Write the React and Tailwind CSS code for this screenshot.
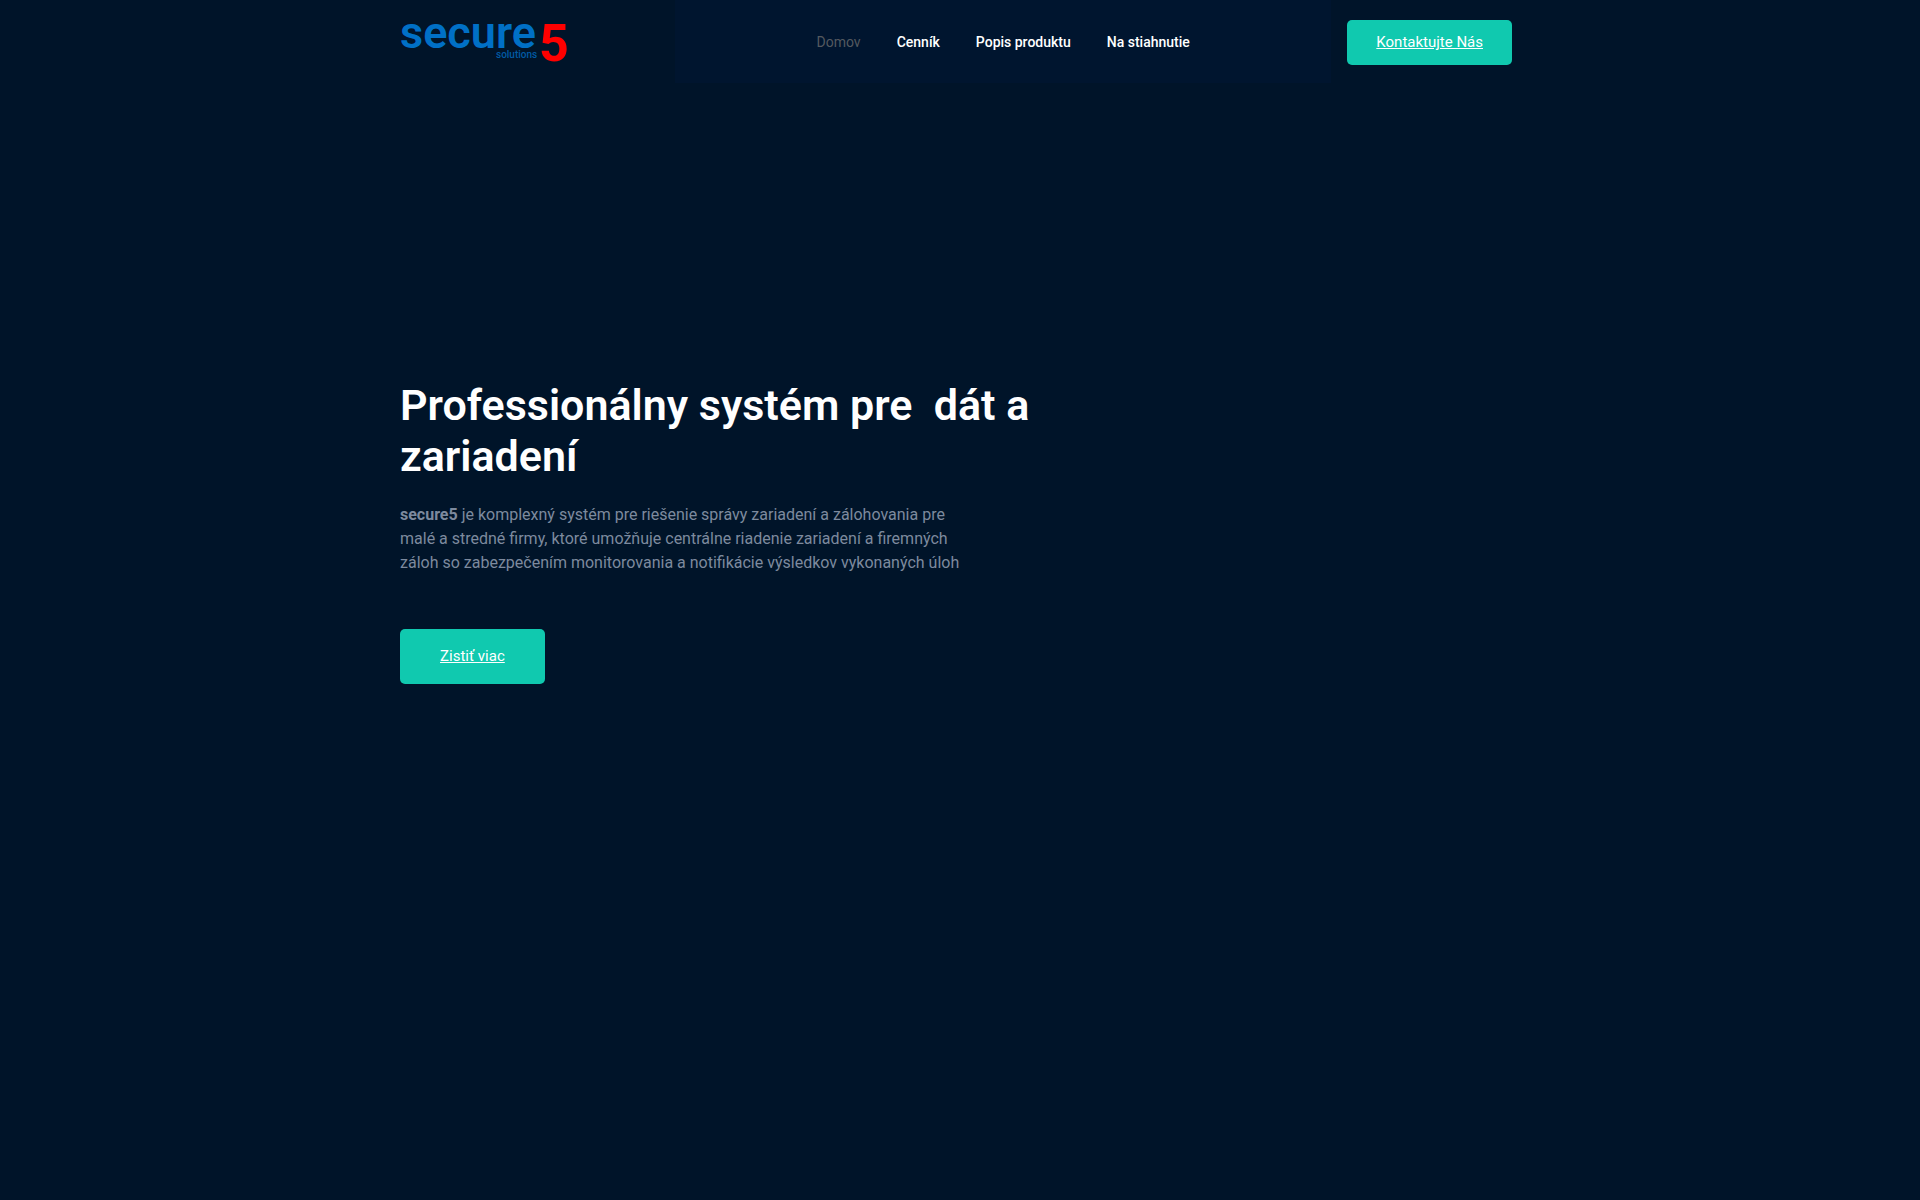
const navItems = [
  { label: 'Cenník', href: '#cennik' },
  { label: 'Popis produktu', href: '#popis' },
  { label: 'Na stiahnutie', href: '#stiahnut' },
];

function Logo() {
  return (
    <svg width="176" height="48" viewBox="0 0 176 48" className="overflow-visible" role="img" aria-label="secure5 solutions">
      <text x="0" y="30" fontFamily="Roboto, sans-serif" fontSize="45" fontWeight="600" fill="#0070c6">
        secure
      </text>
      <text x="96" y="40" fontFamily="Roboto, sans-serif" fontSize="10" fontWeight="500" fill="#005ba5">
        solutions
      </text>
      <text x="139" y="43" fontFamily="'Liberation Sans Narrow', Roboto, sans-serif" fontSize="52" fontWeight="700" fill="#ff0000">
        5
      </text>
    </svg>
  );
}

function Header() {
  return (
    <header className="mx-auto flex w-full max-w-[1140px]">
      <div className="flex w-1/4 items-center pl-[10px]">
        <a href="#domov">
          <Logo />
        </a>
      </div>

      <nav className="flex flex-1 items-center justify-center gap-9 bg-[#00152f] text-sm font-medium text-white">
        <a href="#domov" className="font-normal text-[#54595f]">Domov</a>
        {navItems.map((item) => (
          <a key={item.href} href={item.href}>
            {item.label}
          </a>
        ))}
      </nav>

      <div className="flex pt-5 pr-[18px] pb-[18px] pl-4">
        <a
          href="#kontakt"
          className="flex h-[45px] items-center rounded-[5px] bg-[#10c9af] px-[29px] text-[15px] text-white underline"
        >
          Kontaktujte Nás
        </a>
      </div>
    </header>
  );
}

export default function App() {
  return (
    <div className="min-h-screen bg-[#001429] font-['Roboto',sans-serif]">
      <Header />

      {/* Hero */}
      <main className="mx-auto w-full max-w-[1140px] px-[10px] pt-[297px]">
        <h1 className="max-w-[684px] text-[43px] leading-[51px] font-semibold text-white">
          Professionálny systém pre &nbsp;dát a zariadení
        </h1>
        <p className="mt-[21px] max-w-[570px] text-base text-[#7d8a9e]">
          <strong className="font-bold">secure5</strong> je komplexný systém pre riešenie správy zariadení a
          zálohovania pre malé a stredné firmy, ktoré umožňuje centrálne riadenie zariadení a firemných záloh so
          zabezpečením monitorovania a notifikácie výsledkov vykonaných úloh
        </p>
        <a
          href="#popis"
          className="mt-[54px] inline-flex h-[55px] items-center rounded-[5px] bg-[#10c9af] px-10 text-[15px] text-white underline"
        >
          Zistiť viac
        </a>
      </main>
    </div>
  );
}
